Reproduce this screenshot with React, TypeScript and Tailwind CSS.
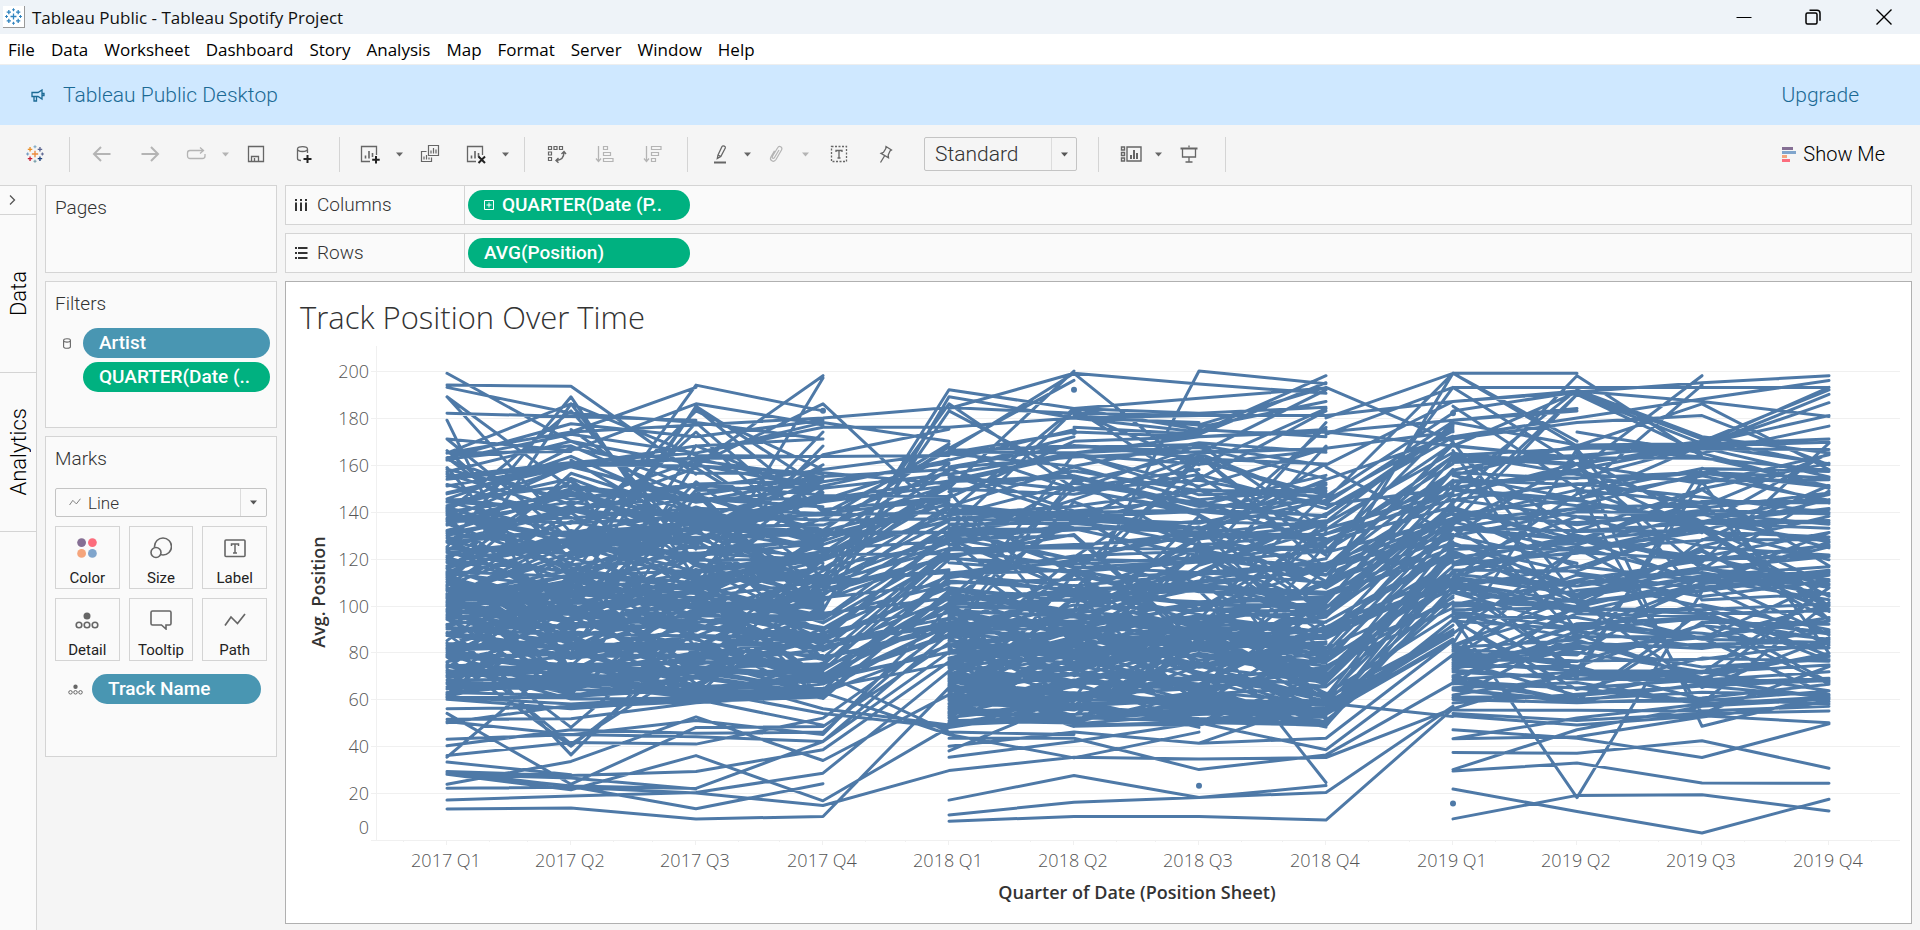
import React from "react";

const UI = "font-['Roboto','Open_Sans',sans-serif]";
const SYS = "font-['Open_Sans','Noto_Sans',sans-serif]";

/* ---------- chart data ---------- */

type Track = { start: number; values: number[] };

const QUARTER_X = [447, 571, 696, 823, 949, 1074, 1199, 1326, 1453, 1577, 1702, 1829];
const QUARTERS = QUARTER_X.map((_, i) => `${2017 + Math.floor(i / 4)} Q${(i % 4) + 1}`);
const TICKS = [200, 180, 160, 140, 120, 100, 80, 60, 40, 20, 0];
const BASE_Y = 840;
const yOf = (v: number) => BASE_Y - v * 2.345;

const OUTLIERS: Track[] = [
  { start: 0, values: [199, 170, 160, 150] },
  { start: 0, values: [194, 193.5, 156] },
  { start: 0, values: [193, 182, 178, 171] },
  { start: 0, values: [189, 131, 140] },
  { start: 0, values: [189, 150, 128] },
  { start: 0, values: [182, 180.6, 179] },
  { start: 0, values: [179, 71, 80] },
  { start: 0, values: [165, 186, 164, 163.5, 164] },
  { start: 0, values: [125, 189, 111, 120] },
  { start: 0, values: [108, 186, 118, 109] },
  { start: 0, values: [140, 183, 124] },
  { start: 0, values: [165, 174, 193] },
  { start: 0, values: [163, 177.5, 172, 179] },
  { start: 0, values: [171, 166, 186, 177] },
  { start: 0, values: [165, 165.7] },
  { start: 0, values: [165, 174, 177, 180, 184.4, 182, 181] },
  { start: 0, values: [162, 173, 165, 178, 170] },
  { start: 0, values: [157, 170, 150, 158, 165] },
  { start: 0, values: [151, 160, 168, 171] },
  { start: 0, values: [155, 161, 165, 176, 176, 180, 178] },
  { start: 0, values: [171, 128, 112, 120] },
  { start: 0, values: [166, 120, 131, 118] },
  { start: 0, values: [163, 124, 142, 126] },
  { start: 1, values: [120, 194, 183] },
  { start: 1, values: [104, 185, 150] },
  { start: 1, values: [112, 184, 140] },
  { start: 1, values: [130, 183, 158] },
  { start: 1, values: [118, 178, 131] },
  { start: 1, values: [126, 174, 122] },
  { start: 1, values: [162, 131, 160] },
  { start: 1, values: [175, 138, 128] },
  { start: 2, values: [160, 198] },
  { start: 2, values: [107, 197] },
  { start: 2, values: [160, 186, 136] },
  { start: 2, values: [149, 151, 162, 175] },
  { start: 2, values: [147, 155, 158, 172] },
  { start: 2, values: [118, 174] },
  { start: 2, values: [112, 168] },
  { start: 3, values: [158, 165, 174, 172] },
  { start: 3, values: [150, 156, 165] },
  { start: 3, values: [141, 146, 170, 172, 175] },
  { start: 3, values: [136.5, 137, 140] },
  { start: 3, values: [107, 192, 184, 175, 172] },
  { start: 3, values: [98, 189, 180, 181, 181, 187] },
  { start: 3, values: [112, 186, 150, 158] },
  { start: 3, values: [105, 183, 155, 140] },
  { start: 4, values: [184, 199, 194.4, 190.5] },
  { start: 4, values: [166, 199, 156] },
  { start: 4, values: [150, 200] },
  { start: 4, values: [167, 196] },
  { start: 4, values: [140, 184, 150] },
  { start: 4, values: [132, 183, 160] },
  { start: 5, values: [98, 200, 194.6] },
  { start: 5, values: [184, 188.4, 192.7] },
  { start: 5, values: [181, 177, 193, 170] },
  { start: 5, values: [184, 182, 184.5] },
  { start: 5, values: [180, 174, 198] },
  { start: 5, values: [176, 173, 195] },
  { start: 5, values: [165, 172, 174, 179, 183] },
  { start: 6, values: [165, 192] },
  { start: 6, values: [176, 187] },
  { start: 6, values: [154, 183] },
  { start: 6, values: [160, 184] },
  { start: 6, values: [118, 178] },
  { start: 6, values: [128, 176] },
  { start: 6, values: [110, 168] },
  { start: 7, values: [180, 199, 199] },
  { start: 7, values: [173, 193, 193, 193, 193] },
  { start: 7, values: [160, 187, 191, 195, 198] },
  { start: 7, values: [174, 168, 163] },
  { start: 7, values: [159, 130, 118] },
  { start: 7, values: [145, 199, 170] },
  { start: 7, values: [120, 193, 160] },
  { start: 7, values: [110, 199, 168] },
  { start: 7, values: [143, 150, 158, 168] },
  { start: 8, values: [187, 191.5, 187, 180.6] },
  { start: 8, values: [183, 191] },
  { start: 8, values: [179, 184] },
  { start: 8, values: [185, 150, 131] },
  { start: 8, values: [143.6, 198, 163.5] },
  { start: 8, values: [168, 191, 171, 160] },
  { start: 8, values: [150, 192, 172, 165] },
  { start: 8, values: [140, 190, 165, 150] },
  { start: 8, values: [135, 190, 169, 171] },
  { start: 8, values: [172, 180, 188, 196] },
  { start: 8, values: [178, 168.5, 169, 193] },
  { start: 8, values: [164, 167, 168, 190] },
  { start: 8, values: [162, 164, 168, 186.5] },
  { start: 8, values: [163, 160, 169, 181] },
  { start: 8, values: [161, 163, 170, 192] },
  { start: 8, values: [171, 178, 181, 160] },
  { start: 9, values: [157.6, 198] },
  { start: 9, values: [148, 194] },
  { start: 9, values: [168, 186, 158] },
  { start: 9, values: [174, 165, 176.5] },
  { start: 0, values: [13.2, 13.6, 9, 10, 65] },
  { start: 0, values: [17, 18.8, 20.3, 28.5, 72] },
  { start: 0, values: [22.1, 22.5, 20, 14.7, 29.6, 35.3, 34.5, 35.2, 56] },
  { start: 0, values: [23.8, 33.5, 52.5, 33.9, 62] },
  { start: 0, values: [29.2, 27.5, 29.2, 38.5, 76] },
  { start: 0, values: [28.5, 23, 22, 42, 80] },
  { start: 0, values: [28, 26.4, 21.8] },
  { start: 0, values: [28, 21.4, 36, 16.7, 48] },
  { start: 0, values: [29, 22.8, 13.3, 24] },
  { start: 0, values: [33.2, 27.8] },
  { start: 0, values: [54, 23.8, 48, 48.4, 84] },
  { start: 0, values: [36, 41.6, 40.9, 52, 90] },
  { start: 0, values: [35.3, 80, 66] },
  { start: 0, values: [40.2, 47, 45.5, 46, 92] },
  { start: 0, values: [43, 45, 44, 42, 88] },
  { start: 0, values: [50.5, 44.9, 51, 45, 99] },
  { start: 0, values: [51.5, 51.7, 58.5, 62] },
  { start: 0, values: [50, 57.5, 60, 49] },
  { start: 0, values: [56, 56.5, 59, 61] },
  { start: 0, values: [60, 56, 60, 61] },
  { start: 0, values: [61, 58, 61, 62] },
  { start: 0, values: [92, 36.3, 90] },
  { start: 0, values: [78, 40, 82] },
  { start: 0, values: [84, 41, 75] },
  { start: 0, values: [88, 48, 93] },
  { start: 2, values: [71, 56, 49] },
  { start: 2, values: [64, 54, 48] },
  { start: 2, values: [73, 63, 45, 35, 46] },
  { start: 2, values: [80, 71, 46, 45] },
  { start: 4, values: [8, 10, 10, 8.5, 56] },
  { start: 4, values: [10.7, 16.1, 18.1, 20.3, 57] },
  { start: 4, values: [17, 27.5, 18.1, 23.2] },
  { start: 4, values: [35.3, 42, 50, 38.5, 79] },
  { start: 4, values: [43.4, 43.4, 30, 36.3, 67] },
  { start: 4, values: [38, 60, 48] },
  { start: 4, values: [40, 46, 41.3, 43.4, 85] },
  { start: 6, values: [41.3, 60] },
  { start: 6, values: [93, 24.5] },
  { start: 6, values: [60, 58.4, 52.7] },
  { start: 8, values: [9, 19, 19.3, 12.4] },
  { start: 8, values: [21.7, 12.2, 3, 17.4] },
  { start: 8, values: [29.4, 32.8, 24.3, 24.2] },
  { start: 8, values: [30, 47, 57, 60] },
  { start: 8, values: [37.3, 37, 42.3, 30.6] },
  { start: 8, values: [43.2, 44, 52.5, 59] },
  { start: 8, values: [43.2, 52, 58, 61] },
  { start: 8, values: [47, 43.4, 35.2, 49.5] },
  { start: 8, values: [53, 49, 53, 50] },
  { start: 8, values: [55.5, 55.3, 55, 57] },
  { start: 8, values: [54, 51, 54, 55] },
  { start: 8, values: [67, 60, 63, 62] },
  { start: 8, values: [56, 72, 67, 69] },
  { start: 8, values: [74, 74, 60, 58] },
  { start: 8, values: [95, 18.1, 106] },
  { start: 9, values: [165, 48.5, 62] },
  { start: 9, values: [150, 54, 74] },
];

const DOTS = [
  [3, 183], [5, 192], [5, 174], [6, 23.1], [8, 15.6], [8, 182],
];

/* Small deterministic generator so the dense middle band is stable between renders. */
function makeRandom(seed: number) {
  let s = seed;
  return () => {
    s = (s * 1664525 + 1013904223) % 4294967296;
    return s / 4294967296;
  };
}

const LEVELS: number[][][] = [
  [[0, 60], [0.1, 71], [0.5, 104], [0.85, 135], [0.95, 148], [1, 160]],
  [[0, 48], [0.15, 62], [0.5, 89], [0.8, 127], [0.93, 150], [1, 170]],
  [[0, 58], [0.18, 79], [0.5, 113], [0.8, 139], [0.94, 159], [1, 170]],
];

function level(year: number, u: number) {
  const q = LEVELS[year];
  for (let i = 1; i < q.length; i++) {
    if (u <= q[i][0]) {
      const t = (u - q[i - 1][0]) / (q[i][0] - q[i - 1][0]);
      return q[i - 1][1] + t * (q[i][1] - q[i - 1][1]);
    }
  }
  return q[q.length - 1][1];
}

function buildTracks(): Track[] {
  const rnd = makeRandom(20177);
  const noise = () => rnd() + rnd() + rnd() - 1.5;
  const counts = [180, 200, 120];
  const tracks: Track[] = [];
  counts.forEach((count, year) => {
    for (let i = 0; i < count; i++) {
      const u = (i + rnd()) / count;
      const base = level(year, u);
      const wild = rnd() < 0.4 ? 3.2 : 1;
      const lo = LEVELS[year][0][1];
      const values: number[] = [];
      for (let q = 0; q < 4; q++) {
        let v = base + noise() * 13 * wild;
        if (v < lo) v = lo + (lo - v) * 0.7;
        if (v > 170) v = 170 - (v - 170) * 1.5;
        values.push(v);
      }
      if (year < 2 && rnd() < 0.55 && base < 145) {
        const shift = year === 0 ? 24 + rnd() * 42 : 38 + rnd() * 46;
        values.push(Math.min(values[3] * 0.78 + shift, 172 + rnd() * 12));
      }
      tracks.push({ start: year * 4, values });
    }
  });
  return tracks;
}

const TRACKS = [...buildTracks(), ...OUTLIERS];
const PATH = TRACKS.map((t) =>
  t.values.map((v, i) => `${i ? "L" : "M"}${QUARTER_X[t.start + i]} ${yOf(v).toFixed(1)}`).join("")
).join("");

function Chart() {
  return (
    <svg viewBox="286 340 1625 582" className="block w-full font-['Open_Sans','Noto_Sans',sans-serif]" role="img" aria-label="Track Position Over Time">
      <g stroke="#f0f0f0" strokeWidth="1" shapeRendering="crispEdges">
        {TICKS.map((t) => (
          <line key={t} x1="371" x2="1900" y1={Math.round(yOf(t)) + 0.5} y2={Math.round(yOf(t)) + 0.5} />
        ))}
        <line x1="376.5" x2="376.5" y1="346" y2="840" />
        {QUARTER_X.map((x) => (
          <g key={x}>
            <line x1={x - 0.5} x2={x - 0.5} y1="840" y2="845" />
            <line x1={x - 43.5} x2={x - 43.5} y1="840" y2="842" />
            <line x1={x + 42.5} x2={x + 42.5} y1="840" y2="842" />
          </g>
        ))}
      </g>
      <path d={PATH} fill="none" stroke="#4e79a7" strokeWidth="3" strokeLinejoin="round" strokeLinecap="round" />
      {DOTS.map(([q, v]) => (
        <circle key={`${q}-${v}`} cx={QUARTER_X[q]} cy={yOf(v)} r="3" fill="#4e79a7" />
      ))}
      <g fontSize="18" fontWeight="300" fill="#555">
        {TICKS.map((t) => (
          <text key={t} x="369" y={t === 0 ? 834 : Math.round(yOf(t)) + 7} textAnchor="end">{t}</text>
        ))}
        {QUARTERS.map((q, i) => (
          <text key={q} x={QUARTER_X[i] - 1} y="867" textAnchor="middle">{q}</text>
        ))}
      </g>
      <g fontSize="18" fontWeight="600" fill="#333" textAnchor="middle">
        <text x="1137" y="899">Quarter of Date (Position Sheet)</text>
        <text transform="translate(325 592) rotate(-90)">Avg. Position</text>
      </g>
    </svg>
  );
}

/* ---------- icons ---------- */

function Svg({ w = 20, h = 20, children, className = "" }: { w?: number; h?: number; children: React.ReactNode; className?: string }) {
  return (
    <svg width={w} height={h} viewBox={`0 0 ${w} ${h}`} fill="none" stroke="currentColor" aria-hidden="true" className={`shrink-0 ${className}`}>
      {children}
    </svg>
  );
}

function Logo({ colors, size }: { colors: string[]; size: number }) {
  const crosses = [
    [10, 10, 3.5], [4.5, 4.8, 2.5], [15.5, 4.8, 2.5], [4.5, 15.2, 2.5], [15.5, 15.2, 2.5],
    [10, 2, 1.7], [10, 18, 1.7], [1.8, 10, 1.7], [18.2, 10, 1.7],
  ];
  return (
    <svg width={size} height={size} viewBox="0 0 20 20" aria-hidden="true">
      {crosses.map(([x, y, r], i) => (
        <path key={i} d={`M${x - r} ${y}h${2 * r}M${x} ${y - r}v${2 * r}`} stroke={colors[i % colors.length]} strokeWidth={i < 5 ? 1.5 : 1.2} />
      ))}
    </svg>
  );
}

const Arrow = ({ flip = false }) => (
  <Svg className={flip ? "-scale-x-100" : ""}><path d="M18.500 10H2.500M9 3L2 10l7 7" strokeWidth="2" /></Svg>
);
const Redo = () => (
  <Svg><path d="M5 14.500H4a2.500 2.500 0 0 1-2.500-2.500V9A2.500 2.500 0 0 1 4 6.500h13M14 3.500l3.500 3L14 9.500M5 14.500h11.500a2.500 2.500 0 0 0 2.500-2.500v-2" strokeWidth="1.300" /></Svg>
);
const Save = () => (
  <Svg><path d="M2.500 2.500h15v15h-15zM5.500 17v-4.500h7V17M8.500 14v3" strokeWidth="1.300" /></Svg>
);
const DbPlus = () => (
  <Svg><path d="M3.500 5c0-3.300 10-3.300 10 0s-10 3.300-10 0v9.500c0 1.500 2 2 3.500 2M13.500 5v4" strokeWidth="1.300" /><path d="M13.500 11v8M9.500 15h8" stroke="#222" strokeWidth="2" /></Svg>
);
const Sheet = ({ mark }: { mark: "plus" | "x" }) => (
  <Svg>
    <path d="M10 17.500H1.500v-15h15V11" strokeWidth="1.300" />
    <path d="M5.500 11.500v3M9 7v7.500M12.500 9v4" strokeWidth="1.600" />
    <path d={mark === "plus" ? "M16 12v7.500M12.200 15.800h7.500" : "M12.500 12.500l6.500 6.500M19 12.500l-6.500 6.500"} stroke="#222" strokeWidth="2" />
  </Svg>
);
const Duplicate = () => (
  <Svg><path d="M8.500 1.500h10v10h-10zM6.500 7.500h-5v10h10v-4M11 6.500v3M13.500 4v5.500M16 5.500v4M4 12.500v3M6.500 11v4.500M9 13.500v2" strokeWidth="1.200" /></Svg>
);
const Swap = () => (
  <Svg><path d="M1.500 2.500h3v3h-3zM7 2.500h3v3H7zM12.500 2.500h3v3h-3zM1.500 8h3v3h-3zM1.500 13.500h3v3h-3z" strokeWidth="1.200" /><path d="M17 8c0 5-2 8-7.500 8.500M14.500 10L17 7.500l2 2.500M11.500 14L9 16.500l2.500 2.300" strokeWidth="1.400" /></Svg>
);
const Sort = ({ flip = false }) => (
  <Svg>
    <path d="M3.500 2v15M1 14.500l2.500 3 2.500-3" strokeWidth="1.300" />
    <path d={flip ? "M8.500 2.500h9.500v3H8.500zM8.500 8.500h7v3h-7zM8.500 14.500h4v3h-4z" : "M8.500 2.500h4v3h-4zM8.500 8.500h7v3h-7zM8.500 14.500H18v3H8.500z"} strokeWidth="1.200" />
  </Svg>
);
const Highlighter = () => (
  <Svg><path d="M8 11L12 2.500c1-1.500 4 0 3.300 1.500l-4.500 8.500-3.500 2zM8 11l3 1.500" strokeWidth="1.300" /><path d="M4 18.500h12" strokeWidth="2" /></Svg>
);
const Clip = () => (
  <Svg><path d="M13 6l-4.500 7.500c-1 1.700-3 .5-2-1.200L11.500 4c1.700-3 5.500-1 4 2l-5.500 9.500c-2.300 3.500-7 1-5-2.800l3.500-6" strokeWidth="1.200" /></Svg>
);
const LabelBox = () => (
  <Svg><path d="M2.500 2.500h15v15h-15z" strokeWidth="1.300" strokeDasharray="2 1.500" /><path d="M7 8V6.500h6V8M10 6.500v7.500M8.500 14h3" strokeWidth="1.300" /></Svg>
);
const Pin = () => (
  <Svg><path d="M11 2.500l5.500 3.500-1.500 1-1.800 4 .3 2.800-7.500-4.500 2.500-1 2.300-3.800zM9.500 12L5.500 18.500" strokeWidth="1.300" /></Svg>
);
const ShowCards = () => (
  <Svg w={22}><path d="M1.500 3h3v3h-3zM1.500 8.500h3v3h-3zM1.500 14h3v3h-3zM7 3h14v14H7z" strokeWidth="1.400" /><path d="M11 11v4M14 6v9M17 9v6" strokeWidth="2" /></Svg>
);
const Present = () => (
  <Svg><path d="M3.500 5v8h13V5M10 13v5M6.500 18h7M10 1.500v2" strokeWidth="1.300" /><path d="M1.500 4.500h17" strokeWidth="2" /></Svg>
);
const Caret = ({ className = "" }) => (
  <svg width="7" height="5" viewBox="0 0 7 5" aria-hidden="true" className={className}><path d="M0 .5h7L3.500 4.500z" fill="currentColor" /></svg>
);
const LineGlyph = ({ w = 14, h = 10 }) => (
  <svg width={w} height={h} viewBox="0 0 22 14" fill="none" stroke="currentColor" strokeWidth="1.700" aria-hidden="true"><path d="M1 12.500L7 4l6.500 6.500L21 1" /></svg>
);
const DetailGlyph = ({ w = 24, h = 17 }) => (
  <svg width={w} height={h} viewBox="0 0 24 17" fill="none" stroke="currentColor" strokeWidth="1.600" aria-hidden="true">
    <circle cx="12" cy="4" r="3.500" fill="currentColor" stroke="none" />
    <circle cx="4" cy="13" r="2.800" /><circle cx="12" cy="13" r="2.800" /><circle cx="20" cy="13" r="2.800" />
  </svg>
);

/* ---------- pieces ---------- */

function Tool({ label, width = "w-12", off = false, children }: { label: string; width?: string; off?: boolean; children: React.ReactNode }) {
  return (
    <button type="button" aria-label={label} className={`flex h-9 shrink-0 items-center justify-center ${width} ${off ? "text-[#b4b4b4]" : "text-[#666]"}`}>
      {children}
    </button>
  );
}
const Sep = ({ className = "" }) => <span className={`h-[35px] w-px shrink-0 bg-[#d4d4d4] ${className}`} />;

function Pill({ color, className, children }: { color: "green" | "blue"; className: string; children: React.ReactNode }) {
  return (
    <button type="button" className={`flex h-[30px] items-center rounded-full pr-3 pl-4 text-left text-[19px] font-medium whitespace-nowrap text-white ${color === "green" ? "bg-[#00b180]" : "bg-[#4996b2]"} ${className}`}>
      {children}
    </button>
  );
}

function Shelf({ name, icon, children }: { name: string; icon: React.ReactNode; children: React.ReactNode }) {
  return (
    <section className="flex h-10 border border-[#d4d4d4] bg-[#fafafa]">
      <h2 className="flex w-[179px] items-center gap-[9px] border-r border-[#d4d4d4] pl-2 text-[19px] font-light text-[#333]">{icon}{name}</h2>
      <div className="flex items-center pl-[3px]">{children}</div>
    </section>
  );
}

const Card = ({ title, className, children }: { title: string; className: string; children?: React.ReactNode }) => (
  <section className={`border border-[#d4d4d4] bg-[#fafafa] ${className}`}>
    <h2 className="px-[9px] pt-2 text-[19px] leading-7 font-light text-[#333]">{title}</h2>
    {children}
  </section>
);

function MarkButton({ label, children }: { label: string; children: React.ReactNode }) {
  return (
    <button type="button" className="flex h-[63px] flex-col items-center justify-between border border-[#d4d4d4] pt-[9px] text-[15px] leading-5 text-[#222]">
      <span className="flex h-6 items-center text-[#666]">{children}</span>
      {label}
    </button>
  );
}

const MENUS = ["File", "Data", "Worksheet", "Dashboard", "Story", "Analysis", "Map", "Format", "Server", "Window", "Help"];

export default function App() {
  return (
    <div className={`flex min-h-screen flex-col bg-[#f5f5f5] text-[#333] ${UI}`}>
      <header className={`flex h-[34px] items-center bg-[#eef3f8] ${SYS}`}>
        <span className="ml-[3px] flex size-[22px] items-center justify-center border-r border-b border-[#999] bg-white"><Logo size={17} colors={["#2f83bf"]} /></span>
        <h1 className="ml-[7px] pt-0.5 text-[17px] text-[#111]">Tableau Public - Tableau Spotify Project</h1>
        <div className="ml-auto flex text-black">
          <button type="button" aria-label="Minimize" className="flex h-8 w-[69px] items-center justify-center"><Svg w={16} h={16}><path d="M.5 8.500h15" /></Svg></button>
          <button type="button" aria-label="Restore" className="flex h-8 w-[69px] items-center justify-center"><Svg w={16} h={16}><rect x="1" y="4" width="11" height="11" rx="1.500" strokeWidth="1.500" /><path d="M4.500 1.200H12a3 3 0 0 1 3 3v7.500" strokeWidth="1.500" /></Svg></button>
          <button type="button" aria-label="Close" className="flex h-8 w-[73px] items-center justify-center"><Svg w={16} h={16}><path d="M.5 .5l15 15M15.500 .5l-15 15" strokeWidth="1.400" /></Svg></button>
        </div>
      </header>

      <nav className={`flex h-[31px] items-center gap-4 border-b border-[#eee] bg-white pt-0.5 pl-2 text-[17px] text-black ${SYS}`}>
        {MENUS.map((m) => <button type="button" key={m}>{m}</button>)}
      </nav>

      <div className="flex h-[60px] items-center bg-[#cfe8ff] pt-0.5 pr-[61px] pl-[31px] text-[21px] font-light text-[#1b6a95]">
        <Svg w={14} h={14}><path d="M1 3.500h6l4-2.500v9L7 7.500H1zM3 7.500V12h2.500V7.500M11 4.500h2v2h-2" strokeWidth="1.300" /></Svg>
        <span className="ml-[18px]">Tableau Public Desktop</span>
        <a href="#upgrade" className="ml-auto">Upgrade</a>
      </div>

      <div className="flex h-[60px] items-center pb-0.5">
        <Tool label="Start page" width="w-[69px]"><Logo size={18} colors={["#eb8a3c", "#eb9129", "#5c6692", "#c72037", "#1f447e", "#7aa6c2", "#7099a6", "#7099c0", "#5c6692"]} /></Tool>
        <Sep />
        <span className="ml-2 flex">
          <Tool label="Undo" off><Arrow /></Tool>
          <Tool label="Redo" off><Arrow flip /></Tool>
          <Tool label="Replay" width="w-11" off><Redo /></Tool>
          <Tool label="Replay options" width="w-3.5" off><Caret /></Tool>
          <Tool label="Save"><Save /></Tool>
          <Tool label="New data source"><DbPlus /></Tool>
        </span>
        <Sep className="ml-[11px]" />
        <span className="ml-2 flex">
          <Tool label="New worksheet" width="w-11"><Sheet mark="plus" /></Tool>
          <Tool label="New worksheet options" width="w-3.5"><Caret /></Tool>
          <Tool label="Duplicate"><Duplicate /></Tool>
          <Tool label="Clear sheet" width="w-11"><Sheet mark="x" /></Tool>
          <Tool label="Clear options" width="w-3.5"><Caret /></Tool>
        </span>
        <Sep className="ml-3" />
        <span className="ml-2 flex">
          <Tool label="Swap rows and columns"><Swap /></Tool>
          <Tool label="Sort ascending" off><Sort /></Tool>
          <Tool label="Sort descending" off><Sort flip /></Tool>
        </span>
        <Sep className="ml-2.5" />
        <span className="ml-3 flex">
          <Tool label="Highlight" width="w-10"><Highlighter /></Tool>
          <Tool label="Highlight options" width="w-3.5"><Caret /></Tool>
          <Tool label="Group members" width="w-11" off><Clip /></Tool>
          <Tool label="Group options" width="w-3.5" off><Caret /></Tool>
          <Tool label="Show mark labels" width="w-[54px]"><LabelBox /></Tool>
          <Tool label="Fix axes" width="w-[38px]"><Pin /></Tool>
        </span>
        <div className="relative ml-5 flex">
          <select aria-label="Fit" className="h-[34px] w-[153px] appearance-none rounded-[2px] border border-[#c4c4c4] bg-[#f5f5f5] py-0 pl-2.5 text-[21px] leading-8 font-light text-[#333]">
            <option>Standard</option>
          </select>
          <span className="pointer-events-none absolute inset-y-px right-px flex w-[25px] items-center justify-center border-l border-[#dcdcdc] text-[#555]"><Caret /></span>
        </div>
        <Sep className="ml-[21px]" />
        <span className="ml-3 flex">
          <Tool label="Show or hide cards" width="w-10"><ShowCards /></Tool>
          <Tool label="Card options" width="w-3.5"><Caret /></Tool>
          <Tool label="Presentation mode"><Present /></Tool>
        </span>
        <Sep className="ml-3" />
        <button type="button" className="mr-[35px] ml-auto flex items-center gap-[7px] text-[20px] font-light text-black">
          <svg width="14" height="15" viewBox="0 0 14 15" aria-hidden="true"><path d="M0 0h11v3H0z" fill="#856f94" /><path d="M0 4h14v3H0z" fill="#80a5cc" /><path d="M0 8h5v3H0z" fill="#f5a57c" /><path d="M0 12h8v3H0z" fill="#fc6d7d" /></svg>
          Show Me
        </button>
      </div>

      <main className="flex flex-1">
        <aside className="flex w-[37px] shrink-0 flex-col border-t border-r border-[#d4d4d4] bg-[#fafafa] text-[22px] font-light text-black">
          <button type="button" aria-label="Expand pane" className="flex h-[29px] items-center border-b border-[#d4d4d4] pl-[9px] text-[#555]"><Svg w={7} h={10}><path d="M1 .5L5.500 5 1 9.500" strokeWidth="1.300" /></Svg></button>
          <button type="button" className="flex h-[158px] items-center justify-center border-b border-[#d4d4d4]"><span className="rotate-180 [writing-mode:vertical-rl]">Data</span></button>
          <button type="button" className="flex h-[159px] items-center justify-center border-b border-[#d4d4d4]"><span className="rotate-180 [writing-mode:vertical-rl]">Analytics</span></button>
        </aside>

        <div className="ml-2 flex w-[232px] shrink-0 flex-col gap-2">
          <Card title="Pages" className="h-[88px]" />
          <Card title="Filters" className="h-[147px]">
            <div className="mt-2.5 flex flex-col gap-1 pr-1.5">
              <div className="flex items-center">
                <span className="flex w-[37px] justify-center pl-1 text-[#666]"><Svg w={8} h={11}><path d="M.6 2.200c0-2 6.800-2 6.800 0v6.600c0 2-6.800 2-6.800 0zM.6 2.600c0 2 6.800 2 6.800 0" strokeWidth="1.100" /></Svg></span>
                <Pill color="blue" className="flex-1">Artist</Pill>
              </div>
              <div className="flex pl-[37px]"><Pill color="green" className="flex-1">QUARTER(Date (..</Pill></div>
            </div>
          </Card>
          <Card title="Marks" className="h-[321px]">
            <div className="px-[9px] pt-[15px]">
              <div className="relative flex">
                <select aria-label="Mark type" className="h-[29px] w-full appearance-none rounded-[2px] border border-[#c4c4c4] bg-[#fafafa] py-0 pl-8 text-[17px] leading-6 font-light text-[#333]">
                  <option>Line</option>
                </select>
                <span className="pointer-events-none absolute top-2.5 left-3.5 text-[#777]"><LineGlyph w={12} h={8} /></span>
                <span className="pointer-events-none absolute inset-y-px right-px flex w-[26px] items-center justify-center border-l border-[#dcdcdc] text-[#555]"><Caret /></span>
              </div>
              <div className="mt-[9px] grid grid-cols-3 gap-[9px]">
                <MarkButton label="Color"><svg width="20" height="20" viewBox="0 0 20 20" aria-hidden="true"><circle cx="4.600" cy="4.600" r="4.400" fill="#856f94" /><circle cx="15.400" cy="4.600" r="4.400" fill="#fc6d7d" /><circle cx="4.600" cy="15.400" r="4.400" fill="#f5a57c" /><circle cx="15.400" cy="15.400" r="4.400" fill="#80a5cc" /></svg></MarkButton>
                <MarkButton label="Size"><Svg w={22} h={22}><circle cx="13" cy="9.500" r="8.500" strokeWidth="1.600" /><circle cx="6" cy="15.500" r="5" strokeWidth="1.600" fill="#fafafa" /></Svg></MarkButton>
                <MarkButton label="Label"><Svg w={22} h={20}><rect x="1" y="2" width="20" height="16.500" rx="1" strokeWidth="1.600" /><path d="M7.500 8V6h7v2M11 6v9M9 15h4" strokeWidth="1.500" /></Svg></MarkButton>
                <MarkButton label="Detail"><DetailGlyph /></MarkButton>
                <MarkButton label="Tooltip"><Svg w={22} h={20}><path d="M1 2.500c0-1 .5-1.500 1.500-1.500h17c1 0 1.500.5 1.500 1.500v11c0 1-.5 1.500-1.500 1.500H16v4l-4.500-4h-9C1.500 15 1 14.500 1 13.500z" strokeWidth="1.600" /></Svg></MarkButton>
                <MarkButton label="Path"><LineGlyph w={22} h={14} /></MarkButton>
              </div>
              <div className="mt-[13px] flex items-center pr-1.5">
                <span className="w-[37px] pl-[13px] text-[#666]"><DetailGlyph w={15} h={11} /></span>
                <Pill color="blue" className="flex-1">Track Name</Pill>
              </div>
            </div>
          </Card>
        </div>

        <div className="mr-2 mb-1.5 ml-2 flex min-w-0 flex-1 flex-col gap-2">
          <Shelf name="Columns" icon={<Svg w={14} h={14}><path d="M2 4.500V13M7 4.500V13M12 4.500V13M2 1v2M7 1v2M12 1v2" strokeWidth="2" /></Svg>}>
            <Pill color="green" className="w-[222px] gap-2">
              <Svg w={10} h={10}><path d="M.5 .5h9v9h-9zM2.500 5h5M5 2.500v5" /></Svg>
              QUARTER(Date (P..
            </Pill>
          </Shelf>
          <Shelf name="Rows" icon={<Svg w={14} h={14}><path d="M4 2h9.500M4 7h9.500M4 12h9.500M1 2h2M1 7h2M1 12h2" strokeWidth="1.800" /></Svg>}>
            <Pill color="green" className="w-[222px]">AVG(Position)</Pill>
          </Shelf>
          <section className="flex flex-1 flex-col border border-[#b0b0b0] bg-white">
            <h2 className="flex h-[58px] items-end pl-3.5 font-['Open_Sans','Noto_Sans',sans-serif] text-[31px] font-light text-[#333]">Track Position Over Time</h2>
            <Chart />
          </section>
        </div>
      </main>
    </div>
  );
}
